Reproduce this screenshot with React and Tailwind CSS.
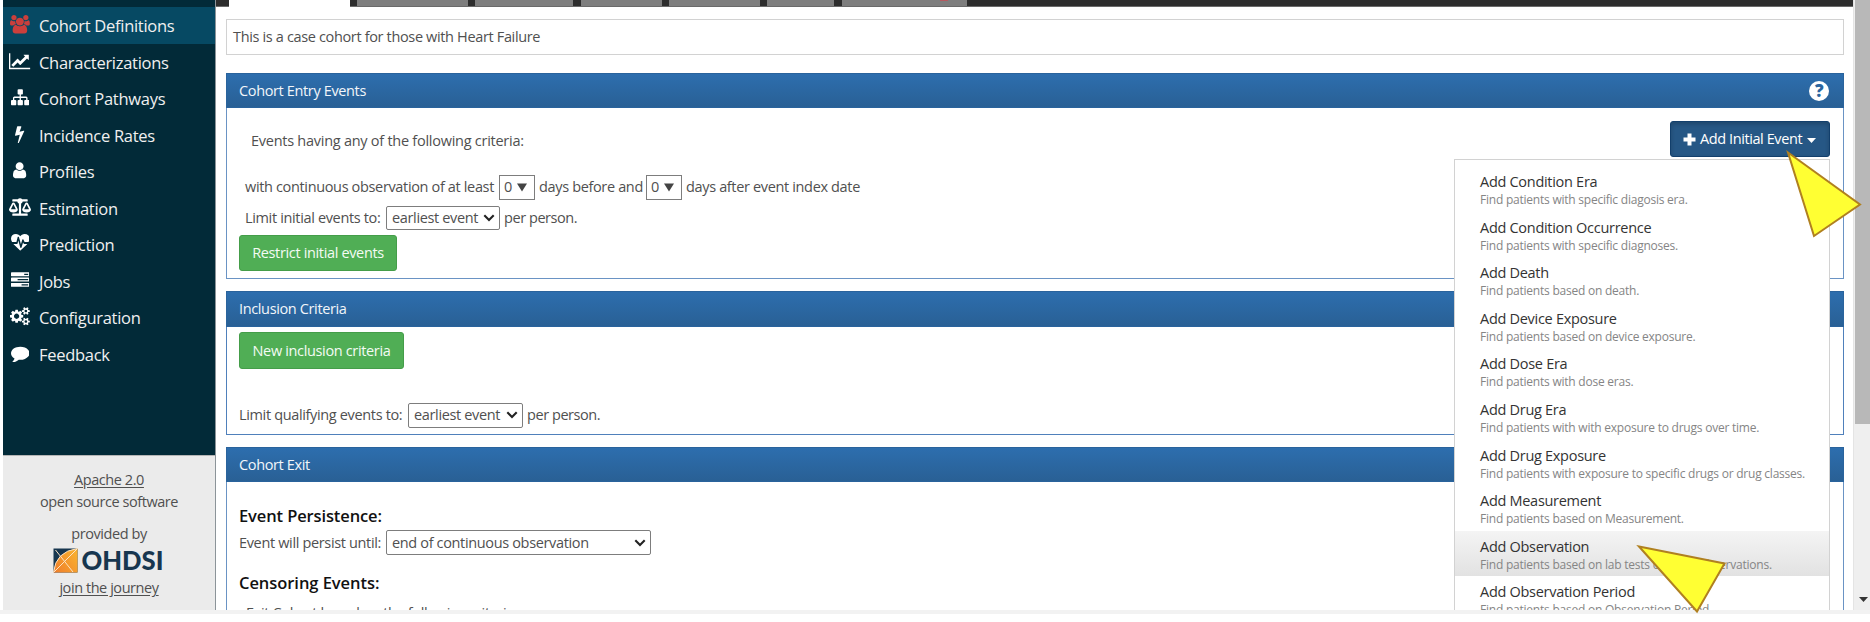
import React from "react";
import { FaBalanceScale } from "react-icons/fa";

const PATHS = {
  users: [1920, "M593 896q-162 5-265 128h-134q-82 0-138-40.5t-56-118.5q0-353 124-353 6 0 43.5 21t97.5 42.5 119 21.5q67 0 133-23-5 37-5 66 0 139 81 256zm1071 637q0 120-73 189.5t-194 69.5h-874q-121 0-194-69.5t-73-189.5q0-53 3.5-103.5t14-109 26.5-108.5 43-97.5 62-81 85.500-53.5 111.5-20q10 0 43 21.5t73 48 107 48 135 21.5 135-21.5 107-48 73-48 43-21.5q61 0 111.5 20t85.5 53.5 62 81 43 97.5 26.5 108.5 14 109 3.5 103.5zm-1024-1277q0 106-75 181t-181 75-181-75-75-181 75-181 181-75 181 75 75 181zm704 384q0 159-112.5 271.5t-271.5 112.5-271.5-112.5-112.5-271.5 112.5-271.5 271.5-112.5 271.5 112.5 112.5 271.5zm576 225q0 78-56 118.5t-138 40.5h-134q-103-123-265-128 81-117 81-256 0-29-5-66 66 23 133 23 59 0 119-21.5t97.5-42.5 43.5-21q124 0 124 353zm-128-609q0 106-75 181t-181 75-181-75-75-181 75-181 181-75 181 75 75 181z"],
  line: [2048, "M2048 1536v128h-2048v-1536h128v1408h1920zM1920 288v435q0 21-19.5 29.5t-35.5-7.5l-121-121-633 633q-10 10-23 10t-23-10l-233-233-416 416-192-192 585-585q10-10 23-10t23 10l233 233 464-464-121-121q-16-16-7.5-35.5t29.5-19.5h435q14 0 23 9t9 23z"],
  sitemap: [1792, "M1792 1248v320q0 40-28 68t-68 28h-320q-40 0-68-28t-28-68v-320q0-40 28-68t68-28h96v-192h-512v192h96q40 0 68 28t28 68v320q0 40-28 68t-68 28h-320q-40 0-68-28t-28-68v-320q0-40 28-68t68-28h96v-192h-512v192h96q40 0 68 28t28 68v320q0 40-28 68t-68 28h-320q-40 0-68-28t-28-68v-320q0-40 28-68t68-28h96v-192q0-52 38-90t90-38h512v-192h-96q-40 0-68-28t-28-68v-320q0-40 28-68t68-28h320q40 0 68 28t28 68v320q0 40-28 68t-68 28h-96v192h512q52 0 90 38t38 90v192h96q40 0 68 28t28 68z"],
  bolt: [896, "M885 566q18 20 7 44l-540 1157q-13 25-42 25-4 0-14-2-17-5-25.5-19t-4.5-30l197-808-406 101q-4 1-12 1-18 0-31-11-18-15-13-39l201-825q4-14 16-23t28-9h328q19 0 32 12.5t13 29.5q0 8-5 18l-171 463 396-98q8-2 12-2 19 0 34 15z"],
  user: [1280, "M1280 1399q0 109-62.5 187t-150.5 78h-854q-88 0-150.5-78t-62.5-187q0-85 8.5-160.5t31.5-152 58.5-131 94-89 134.5-34.5q131 128 313 128t313-128q76 0 134.5 34.5t94 89 58.5 131 31.5 152 8.5 160.5zm-256-887q0 159-112.5 271.5t-271.5 112.5-271.5-112.5-112.5-271.5 112.5-271.5 271.5-112.5 271.5 112.5 112.5 271.5z"],
  heartbeat: [1792, "M1280 960h305q-5 6-10 10.5t-9 7.5l-3 4-623 600q-18 18-44 18t-44-18l-624-602q-5-2-21-20h369q22 0 39.5-13.5t22.5-34.5l70-281 190 667q6 20 23 33t39 13q21 0 38-13t23-33l146-485 56 112q18 35 57 35zm512-492q0 145-103 300h-369l-111-221q-8-17-25.5-27t-36.5-8q-45 5-56 46l-129 430-196-686q-6-20-23.5-33t-39.5-13-39 13.5-22 34.5l-116 464h-423q-103-155-103-300 0-220 127-344t351-124q62 0 126.5 21.5t120 58 95.5 68.5 76 68q36-36 76-68t95.5-68.5 120-58 126.5-21.5q224 0 351 124t127 344z"],
  tasks: [1792, "M1024 1408h640v-128h-640v128zm-384-512h1024v-128h-1024v128zm640-512h384v-128h-384v128zm512 832v256q0 26-19 45t-45 19h-1664q-26 0-45-19t-19-45v-256q0-26 19-45t45-19h1664q26 0 45 19t19 45zm0-512v256q0 26-19 45t-45 19h-1664q-26 0-45-19t-19-45v-256q0-26 19-45t45-19h1664q26 0 45 19t19 45zm0-512v256q0 26-19 45t-45 19h-1664q-26 0-45-19t-19-45v-256q0-26 19-45t45-19h1664q26 0 45 19t19 45z"],
  cogs: [1920, "M896 896q0-106-75-181t-181-75-181 75-75 181 75 181 181 75 181-75 75-181zm768 512q0-52-38-90t-90-38-90 38-38 90q0 53 37.5 90.5t90.5 37.5 90.5-37.5 37.5-90.5zm0-1024q0-52-38-90t-90-38-90 38-38 90q0 53 37.5 90.5t90.5 37.5 90.5-37.5 37.5-90.5zm-384 421v185q0 10-7 19.5t-16 10.5l-155 24q-11 35-32 76 34 48 90 115 7 11 7 20 0 12-7 19-23 30-82.5 89.5t-78.5 59.5q-11 0-21-7l-115-90q-37 19-77 31-11 108-23 155-7 24-30 24h-186q-11 0-20-7.5t-10-17.5l-23-153q-34-10-75-31l-118 89q-7 7-20 7-11 0-21-8-144-133-144-160 0-9 7-19 10-14 41-53t47-61q-23-44-35-82l-152-24q-10-1-17-9.5t-7-19.5v-185q0-10 7-19.5t16-10.5l155-24q11-35 32-76-34-48-90-115-7-11-7-20 0-12 7-20 22-30 82-89t79-59q11 0 21 7l115 90q34-18 77-32 11-108 23-154 7-24 30-24h186q11 0 20 7.5t10 17.5l23 153q34 10 75 31l118-89q8-7 20-7 11 0 21 8 144 133 144 160 0 8-7 19-12 16-42 54t-45 60q23 48 34 82l152 23q10 2 17 10.5t7 19.5zm640 533v140q0 16-149 31-12 27-30 52 51 113 51 138 0 4-4 7-122 71-124 71-8 0-46-47t-52-68q-20 2-30 2t-30-2q-14 21-52 68t-46 47q-2 0-124-71-4-3-4-7 0-25 51-138-18-25-30-52-149-15-149-31v-140q0-16 149-31 13-29 30-52-51-113-51-138 0-4 4-7 4-2 35-20t59-34 30-16q8 0 46 46.5t52 67.5q20-2 30-2t30 2q51-71 92-112l6-2q4 0 124 70 4 3 4 7 0 25-51 138 17 23 30 52 149 15 149 31zm0-1024v140q0 16-149 31-12 27-30 52 51 113 51 138 0 4-4 7-122 71-124 71-8 0-46-47t-52-68q-20 2-30 2t-30-2q-14 21-52 68t-46 47q-2 0-124-71-4-3-4-7 0-25 51-138-18-25-30-52-149-15-149-31v-140q0-16 149-31 13-29 30-52-51-113-51-138 0-4 4-7 4-2 35-20t59-34 30-16q8 0 46 46.5t52 67.5q20-2 30-2t30 2q51-71 92-112l6-2q4 0 124 70 4 3 4 7 0 25-51 138 17 23 30 52 149 15 149 31z"],
  comment: [1792, "M1792 896q0 174-120 321.5t-326 233-450 85.5q-70 0-145-8-198 175-460 242-49 14-114 22-17 2-30.5-9t-17.5-29v-1q-3-4-.5-12t2-10 4.5-9.5l6-9 7-8.5 8-9q7-8 31-34.5t34.5-38 31-39.5 32.5-51 27-59 26-76q-157-89-247.5-220t-90.5-281q0-130 71-248.5t191-204.5 286-136.5 348-50.5q244 0 450 85.5t326 233 120 321.5z"],
};

function Icon({ name }) {
  if (name === "scale") return <FaBalanceScale className="h-[18px] w-[22px]" />;
  const [w, d] = PATHS[name];
  return (
    <svg viewBox={`0 0 ${w} 1792`} height="18.5" width={(w / 1792) * 18.5} fill="currentColor" className="shrink-0">
      <path d={d} />
    </svg>
  );
}

const NAV = [
  ["Cohort Definitions", "users"],
  ["Characterizations", "line"],
  ["Cohort Pathways", "sitemap"],
  ["Incidence Rates", "bolt"],
  ["Profiles", "user"],
  ["Estimation", "scale"],
  ["Prediction", "heartbeat"],
  ["Jobs", "tasks"],
  ["Configuration", "cogs"],
  ["Feedback", "comment"],
];

const EVENTS = [
  ["Add Condition Era", "Find patients with specific diagosis era."],
  ["Add Condition Occurrence", "Find patients with specific diagnoses."],
  ["Add Death", "Find patients based on death."],
  ["Add Device Exposure", "Find patients based on device exposure."],
  ["Add Dose Era", "Find patients with dose eras."],
  ["Add Drug Era", "Find patients with with exposure to drugs over time."],
  ["Add Drug Exposure", "Find patients with exposure to specific drugs or drug classes."],
  ["Add Measurement", "Find patients based on Measurement."],
  ["Add Observation", "Find patients based on lab tests or other observations."],
  ["Add Observation Period", "Find patients based on Observation Period."],
];

function Sidebar() {
  return (
    <aside className="flex w-[213px] shrink-0 flex-col border-r border-[#8c9499] bg-[#022a38]">
      <nav className="mt-[7px] h-[448px]">
        {NAV.map(([label, icon], i) => (
          <div
            key={label}
            className={`flex h-[36.5px] items-center pt-[2px] text-[16.5px] tracking-[-0.017em] text-[#f0f0f0] ${i === 0 ? "bg-[#064963]" : ""}`}
          >
            <span className={`mb-[4px] ml-[6px] flex w-[22px] justify-center ${i === 0 ? "text-[#cb3f3c]" : "text-white"}`}>
              <Icon name={icon} />
            </span>
            <span className="ml-[8px] leading-[22px]">{label}</span>
          </div>
        ))}
      </nav>
      <div className="flex flex-1 flex-col items-center border-t border-[#b5b5b5] bg-[#ebebeb] pt-[13px] text-[14.5px] leading-[22px] tracking-[-0.03em] text-[#505050]">
        <span className="underline underline-offset-2">Apache 2.0</span>
        <span>open source software</span>
        <span className="mt-[10px]">provided by</span>
        <svg width="112" height="26" viewBox="0 0 112 26" className="mt-[3px] overflow-visible">
          <defs>
            <linearGradient id="kite" x1="0" y1="1" x2="1" y2="0.3">
              <stop offset="0" stopColor="#ee7d2c" />
              <stop offset="1" stopColor="#f9ae2e" />
            </linearGradient>
          </defs>
          <rect x="0.5" y="0.5" width="24" height="24" fill="#17364f" />
          <path d="M24.5 .5V24.500H.5Q2.500 3.500 24.500 .5z" fill="url(#kite)" />
          <path d="M.5 24.500 24.500 .5M2.500 2 20 24M.5 24.500Q2.500 3.500 24.500 .5" fill="none" stroke="#fbe3c4" strokeWidth="1" />
          <text x="28.500" y="22" textLength="82" lengthAdjust="spacingAndGlyphs" letterSpacing="0" fontFamily="Lato" fontWeight="900" fontSize="26" fill="#17364f">OHDSI</text>
        </svg>
        <span className="mt-[3px] underline underline-offset-2">join the journey</span>
      </div>
    </aside>
  );
}

function TabStrip() {
  return (
    <div className="flex h-[7px] border-b border-[#6a6a6a] bg-[#2d2d2d]">
      <div className="ml-[13px] h-[7px] w-[121px] bg-white" />
      <div className="ml-[7px] w-[111px] bg-[#7e7e7e]" />
      <div className="ml-[7px] w-[98px] bg-[#7e7e7e]" />
      <div className="ml-[8px] w-[81px] bg-[#7e7e7e]" />
      <div className="ml-[7px] w-[91px] bg-[#7e7e7e]" />
      <div className="ml-[7px] w-[67px] bg-[#7e7e7e]" />
      <div className="ml-[8px] w-[125px] bg-[#7e7e7e] pl-[98px]">
        <div className="h-px w-[8px] bg-[#b45a60]" />
      </div>
    </div>
  );
}

function PanelHeader({ children, help, tall }) {
  return (
    <div
      className={`-mx-px -mt-px flex items-center justify-between border border-[#2a639c] bg-gradient-to-b from-[#2d6eae] to-[#296095] pl-[12px] pr-[14px] text-[14.5px] tracking-[-0.025em] text-[#f2f6fa] ${tall ? "h-[36px]" : "h-[35px]"}`}
    >
      <span>{children}</span>
      {help && (
        <span className="flex size-[20px] items-center justify-center rounded-full bg-white text-[17px] font-extrabold leading-none text-[#2a659f]">?</span>
      )}
    </div>
  );
}

function Chevron() {
  return (
    <svg width="12" height="8" viewBox="0 0 12 8" className="shrink-0">
      <path d="M1.300 1.300 6 6l4.700-4.700" fill="none" stroke="#222" strokeWidth="2.100" />
    </svg>
  );
}

function Select({ className, children }) {
  return (
    <span className={`flex items-center justify-between rounded-[2px] border border-[#7d7d7d] bg-white pl-[5px] pr-[4px] ${className}`}>
      <span>{children}</span>
      <Chevron />
    </span>
  );
}

function DaysBox({ className }) {
  return (
    <span className={`flex h-[25px] w-[36px] items-center border border-[#7d7d7d] pl-[4px] ${className}`}>
      <span>0</span>
      <svg width="10" height="9" viewBox="0 0 10 9" className="ml-[5px]">
        <path d="M0 .5h10L5 8.500z" fill="#444" />
      </svg>
    </span>
  );
}

function GreenButton({ className, children }) {
  return (
    <button className={`flex items-center justify-center rounded-[3px] border border-[#449d49] bg-[#50ae55] text-[#f4fbf4] ${className}`}>
      {children}
    </button>
  );
}

function EventMenu() {
  return (
    <div className="absolute left-[1454px] top-[159px] z-10 w-[376px] border border-[#d2d2d2] bg-white pb-2 pt-[6px]">
      {EVENTS.map(([title, hint], i) => (
        <div key={title} className={`h-[45.62px] pl-[25px] pt-[6px] ${i === 8 ? "bg-gradient-to-b from-[#f4f4f4] to-[#e2e2e2]" : ""}`}>
          <div className="text-[14.5px] leading-[20px] tracking-[-0.02em] text-[#333]">{title}</div>
          <div className="text-[12px] leading-[16px] tracking-[-0.019em] text-[#858585]">{hint}</div>
        </div>
      ))}
    </div>
  );
}

export default function App() {
  return (
    <div className="h-[622px] overflow-hidden bg-white font-['Open_Sans',sans-serif] text-[14.5px] tracking-[-0.024em] text-[#505050]">
      <div className="relative flex h-[610px] overflow-hidden pl-[3px]">
        <Sidebar />
        <main className="w-[1637px] shrink-0 whitespace-nowrap">
          <TabStrip />
          <div className="ml-[10px] w-[1618px]">
            <div className="mt-[12px] flex h-[36px] items-center border border-[#d2d2d2] pl-[6px]">
              This is a case cohort for those with Heart Failure
            </div>

            <section className="mt-[18px] h-[206px] border border-[#6a93c4]">
              <PanelHeader help>Cohort Entry Events</PanelHeader>
              <div className="flex h-[62px] items-start justify-between pl-[24px] pr-[13px] pt-[13px]">
                <span className="pt-[9px] tracking-[-0.018em]">Events having any of the following criteria:</span>
                <button className="flex h-[36px] w-[160px] items-center rounded-[3px] border border-[#123f6c] bg-[#265785] pl-[12px] text-white shadow-[inset_0_2px_4px_rgba(0,0,0,0.2)]">
                  <svg width="13" height="13" viewBox="0 0 13 13">
                    <path d="M4.500 .5h4v4h4v4h-4v4h-4v-4h-4v-4h4z" fill="#fff" />
                  </svg>
                  <span className="ml-[4px] tracking-[-0.028em]">Add Initial Event</span>
                  <svg width="9" height="5" viewBox="0 0 9 5" className="ml-[5px] mt-[3px]">
                    <path d="M0 0h9L4.500 5z" fill="#fff" />
                  </svg>
                </button>
              </div>
              <div className="flex h-[34px] items-center pl-[18px]">
                <span className="w-[254px]">with continuous observation of at least</span>
                <DaysBox />
                <span className="ml-[4px] w-[107px]">days before and</span>
                <DaysBox />
                <span className="ml-[4px]">days after event index date</span>
              </div>
              <div className="flex h-[27px] items-center pl-[18px]">
                <span className="w-[141px]">Limit initial events to:</span>
                <Select className="h-[24px] w-[114px]">earliest event</Select>
                <span className="ml-[4px] tracking-[-0.03em]">per person.</span>
              </div>
              <GreenButton className="ml-[12px] mt-[4px] h-[36px] w-[158px]">Restrict initial events</GreenButton>
            </section>

            <section className="mt-[12px] h-[144px] border border-[#4f80bb]">
              <PanelHeader tall>Inclusion Criteria</PanelHeader>
              <GreenButton className="ml-[12px] mt-[5px] h-[37px] w-[165px]">New inclusion criteria</GreenButton>
              <div className="mt-[33px] flex h-[26px] items-center pl-[12px]">
                <span className="w-[169px]">Limit qualifying events to:</span>
                <Select className="h-[25px] w-[115px]">earliest event</Select>
                <span className="ml-[4px] tracking-[-0.03em]">per person.</span>
              </div>
            </section>

            <section className="mt-[12px] h-[200px] border border-[#6a93c4]">
              <PanelHeader>Cohort Exit</PanelHeader>
              <div className="pl-[12px] pt-[23px]">
                <h2 className="text-[16.5px] font-semibold leading-[22px] tracking-[-0.007em] text-[#111]">Event Persistence:</h2>
                <div className="mt-[3px] flex h-[25px] items-center">
                  <span className="w-[147px]">Event will persist until:</span>
                  <Select className="h-[25px] w-[265px]">end of continuous observation</Select>
                </div>
                <h2 className="mt-[17px] text-[16.5px] font-semibold leading-[22px] tracking-[-0.003em] text-[#111]">Censoring Events:</h2>
                <div className="flex justify-between pl-[7px] pr-[13px] pt-[7px]">
                  <span className="pt-[2px] leading-[20px]">Exit Cohort based on the following criteria:</span>
                  <span className="h-[36px] w-[160px] rounded-[3px] bg-[#24517f]" />
                </div>
              </div>
            </section>
          </div>
        </main>
        <div className="flex w-[17px] shrink-0 flex-col items-center border-l border-[#e4e4e4] bg-[#efefef]">
          <div className="h-[424px] w-[15px] self-end bg-[#b8b8b8]" />
          <svg width="9" height="5" viewBox="0 0 9 5" className="ml-[2px] mt-[173px]">
            <path d="M0 0h9L4.500 5z" fill="#333" />
          </svg>
        </div>
        <EventMenu />
      </div>
      <div className="h-[4px] bg-[#f2f2f2]" />
      <svg width="1870" height="622" className="pointer-events-none absolute left-0 top-0 z-20">
        <g fill="#ffff33" stroke="#b08020" strokeWidth="2">
          <path d="M1788 152.500 1860 204.500 1814 236z" />
          <path d="M1639 546.500 1724.500 563.500 1697 611.500z" />
        </g>
      </svg>
    </div>
  );
}
